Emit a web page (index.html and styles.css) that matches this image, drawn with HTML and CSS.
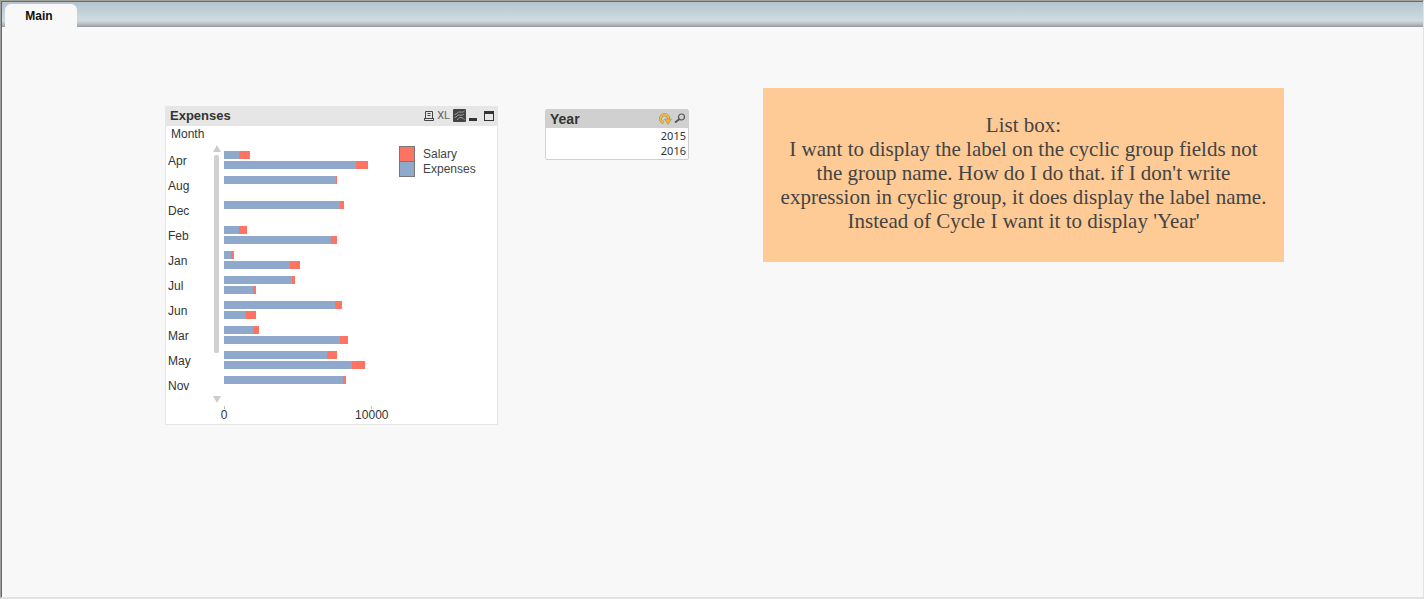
FILE: index.html
```html
<!DOCTYPE html>
<html lang="en">
<head>
<meta charset="utf-8">
<title>Main</title>
<link rel="stylesheet" href="styles.css">
</head>
<body>
<div class="window">
  <nav class="tabs"><button class="tab" type="button">Main</button></nav>
  <main class="sheet">
    <section class="chart">
      <header class="chart-head">
        <h2 class="title">Expenses</h2>
        <div class="tools">
          <button class="tool" type="button" aria-label="Print"><svg width="10" height="10" viewBox="0 0 10 10" fill="none" stroke="#444"><path d="M1.500 7.500v-7h7v7M3.500 2.500h3M3.500 4.500h3M0 7.500h10M.5 7v2.500h9V7"/></svg></button>
          <button class="tool xl" type="button" aria-label="Send to Excel"><span>XL</span></button>
          <button class="tool" type="button" aria-label="Fast change"><svg width="13" height="13" viewBox="0 0 13 13"><rect width="13" height="13" rx="1" fill="#444"/><path d="M1.500 5.500C4 5.500 4.500 2.500 7 3s3 0 4.500-1M1.500 8.500C4 8.500 4 5.500 6.500 6s3 0 4.500-1M4 10.500C6 10.500 5.500 8 8 8.500s2 1.500 3.500 2" fill="none" stroke="#aaa" stroke-width=".9"/></svg></button>
          <button class="tool" type="button" aria-label="Minimize"><svg width="8" height="11" viewBox="0 0 8 11"><path d="M0 8h8v3H0z" fill="#333"/></svg></button>
          <button class="tool max" type="button" aria-label="Maximize"><svg width="10" height="10" viewBox="0 0 10 10"><path d="M0 0h10v10H0zM1 3v6h8V3z" fill="#333" fill-rule="evenodd"/></svg></button>
        </div>
      </header>
      <div class="dimension">Month</div>
      <div class="chart-body">
        <div class="months" id="months"></div>
        <div class="scroll" aria-hidden="true"><i class="up"></i><i class="thumb"></i><i class="down"></i></div>
        <div class="plot">
          <div class="bars" id="bars"></div>
          <div class="axis"><span class="mark zero">0</span><span class="mark ten">10000</span></div>
        </div>
        <ul class="legend">
          <li><i class="swatch salary"></i>Salary</li>
          <li><i class="swatch expenses"></i>Expenses</li>
        </ul>
      </div>
    </section>
    <section class="list">
      <header class="list-head">
        <h2 class="title">Year</h2>
        <div class="tools">
          <button class="tool" type="button" aria-label="Cycle"><svg width="13" height="12" viewBox="0 0 13 12"><path d="M4.500 9.500A4 4 0 1 1 9.500 6" fill="none" stroke="#9a8450" stroke-width="3"/><path d="M4.500 9.500A4 4 0 1 1 9.500 6" fill="none" stroke="#f5bd3c" stroke-width="2"/><path d="M5.500 6h7L9 11.500z" fill="#f2b632" stroke="#9a8450" stroke-width=".5"/></svg></button>
          <button class="tool" type="button" aria-label="Search"><svg width="12" height="12" viewBox="0 0 12 12" fill="none" stroke="#555"><circle cx="7.500" cy="4" r="3" stroke-width="1.200"/><path d="M5.500 6L1 9.500" stroke-width="1.800"/></svg></button>
        </div>
      </header>
      <button class="value" type="button">2015</button>
      <button class="value" type="button">2016</button>
    </section>
    <p class="note">List box:<br>I want to display the label on the cyclic group fields not the group name. How do I do that. if I don't write expression in cyclic group, it does display the label name. Instead of Cycle I want it to display 'Year'</p>
  </main>
</div>
<script src="chart.js"></script>
</body>
</html>
```
FILE: styles.css
```css
* { box-sizing: border-box; }
body { margin: 0; background: #e2e2e2; font-family: "Liberation Sans", Arial, sans-serif; font-size: 12px; color: #333; }
button { font: inherit; color: inherit; border: 0; padding: 0; background: none; cursor: pointer; }
.window { min-height: 100vh; display: flex; flex-direction: column; background: #f8f8f8; border-style: solid; border-width: 1px 1px 2px; border-color: #a5a29c #e2e2e2 #e2e2e2 #a0a0a0; }
.tabs { height: 26px; padding: 2px 0 0 3px; border-top: 1px solid #666b70; border-left: 1px solid #666; background: linear-gradient(#b5c5cf, #cfdbe1 75%, #b8bfc4 88%, #96999d); display: flex; }
.tab { width: 72px; padding-right: 4px; background: #f8f8f8; border-radius: 6px 6px 0 0; font-weight: bold; color: #111; }
.sheet { flex: 1; border-left: 1px solid #666; padding: 61px 139px 40px 163px; display: grid; grid-template-columns: 333fr 47fr 144fr 74fr 521fr; align-items: start; }
.title { margin: 0; font-size: 13px; line-height: 18px; font-weight: bold; }
.tools { display: flex; align-items: center; }
.tool { display: flex; align-items: center; }

.chart { grid-column: 1; margin-top: 18px; border: 1px solid #e6e6e6; background: #fff; }
.chart-head { height: 19px; padding: 0 3px 2px 4px; background: #e6e6e6; display: flex; justify-content: space-between; }
.chart-head .tools { gap: 3px; }
.xl { font-family: Roboto, sans-serif; font-size: 11px; color: #666; }
.max { margin-left: 4px; }
.dimension { height: 18px; padding-left: 5px; line-height: 16px; }
.chart-body { display: grid; grid-template-columns: 47px 11px 1fr 98px; height: 280px; }
.months { padding: 7px 0 0 2px; }
.month { height: 25px; line-height: 20px; }
.scroll { display: flex; flex-direction: column; align-items: flex-start; padding: 1px 0 21px; }
.up, .down { border: 4px solid transparent; }
.up { border-top: 0; border-bottom: 7px solid #ccc; }
.down { border-bottom: 0; border-top: 7px solid #ccc; margin-top: auto; }
.thumb { width: 5px; height: 198px; margin: 3px 1px 0; border-radius: 2px; background: #d0d0d0; }
.plot { padding-top: 7px; margin-right: 5px; }
.group { height: 25px; display: flex; flex-direction: column; gap: 2px; }
.bar { height: 8px; display: flex; }
.expenses { background: #8ea9cb; }
.salary { background: #ff7363; }
.axis { display: flex; padding-top: 5px; }
.mark { display: flex; flex-direction: column; align-items: center; line-height: 12px; }
.mark::before { content: ""; width: 1px; height: 3px; background: #bbb; }
.zero { width: 8px; margin-left: -4px; }
.ten { width: 36px; margin-left: 74%; }
.legend { margin: 2px 0 0; padding: 0; list-style: none; color: #444; }
.legend li { display: flex; gap: 8px; height: 15px; line-height: 16px; }
.swatch { width: 16px; height: 16px; border: 1px solid #777; }

.list { grid-column: 3; margin-top: 21px; padding-bottom: 1px; border: 1px solid #d0d0d0; border-radius: 2px; background: #fff; display: flex; flex-direction: column; }
.list-head { height: 18px; padding: 0 2px 1px 4px; background: #d0d0d0; display: flex; justify-content: space-between; }
.list-head .title { font-size: 14px; }
.list-head .tools { gap: 2px; }
.value { height: 15px; padding-right: 2px; line-height: 15px; text-align: right; font-family: "Noto Sans", sans-serif; font-size: 11px; }

.note { grid-column: 5; margin: 0; padding: 25px 16px 29px; background: #fecb96; font-family: "Liberation Serif", serif; font-size: 21px; line-height: 24px; text-align: center; color: #444; }
```
FILE: chart.js
```js
// Each month holds [expenses, salary] pairs; the plot is 170 units wide.
const data = [
  ["Apr", [[15, 11], [132, 12]]],
  ["Aug", [[112, 1]]],
  ["Dec", [[116, 4]]],
  ["Feb", [[15, 8], [107, 6]]],
  ["Jan", [[7, 3], [66, 10]]],
  ["Jul", [[68, 3], [29, 3]]],
  ["Jun", [[111, 7], [22, 10]]],
  ["Mar", [[29, 6], [116, 8]]],
  ["May", [[103, 10], [128, 13]]],
  ["Nov", [[119, 3]]]
];
const scale = 170;
const piece = (name, value) => `<div class="${name}" style="width:${value / scale * 100}%"></div>`;
document.getElementById("months").innerHTML = data.map(([m]) => `<div class="month">${m}</div>`).join("");
document.getElementById("bars").innerHTML = data.map(([, rows]) =>
  `<div class="group">${rows.map(([e, s]) => `<div class="bar">${piece("expenses", e)}${piece("salary", s)}</div>`).join("")}</div>`).join("");
```
